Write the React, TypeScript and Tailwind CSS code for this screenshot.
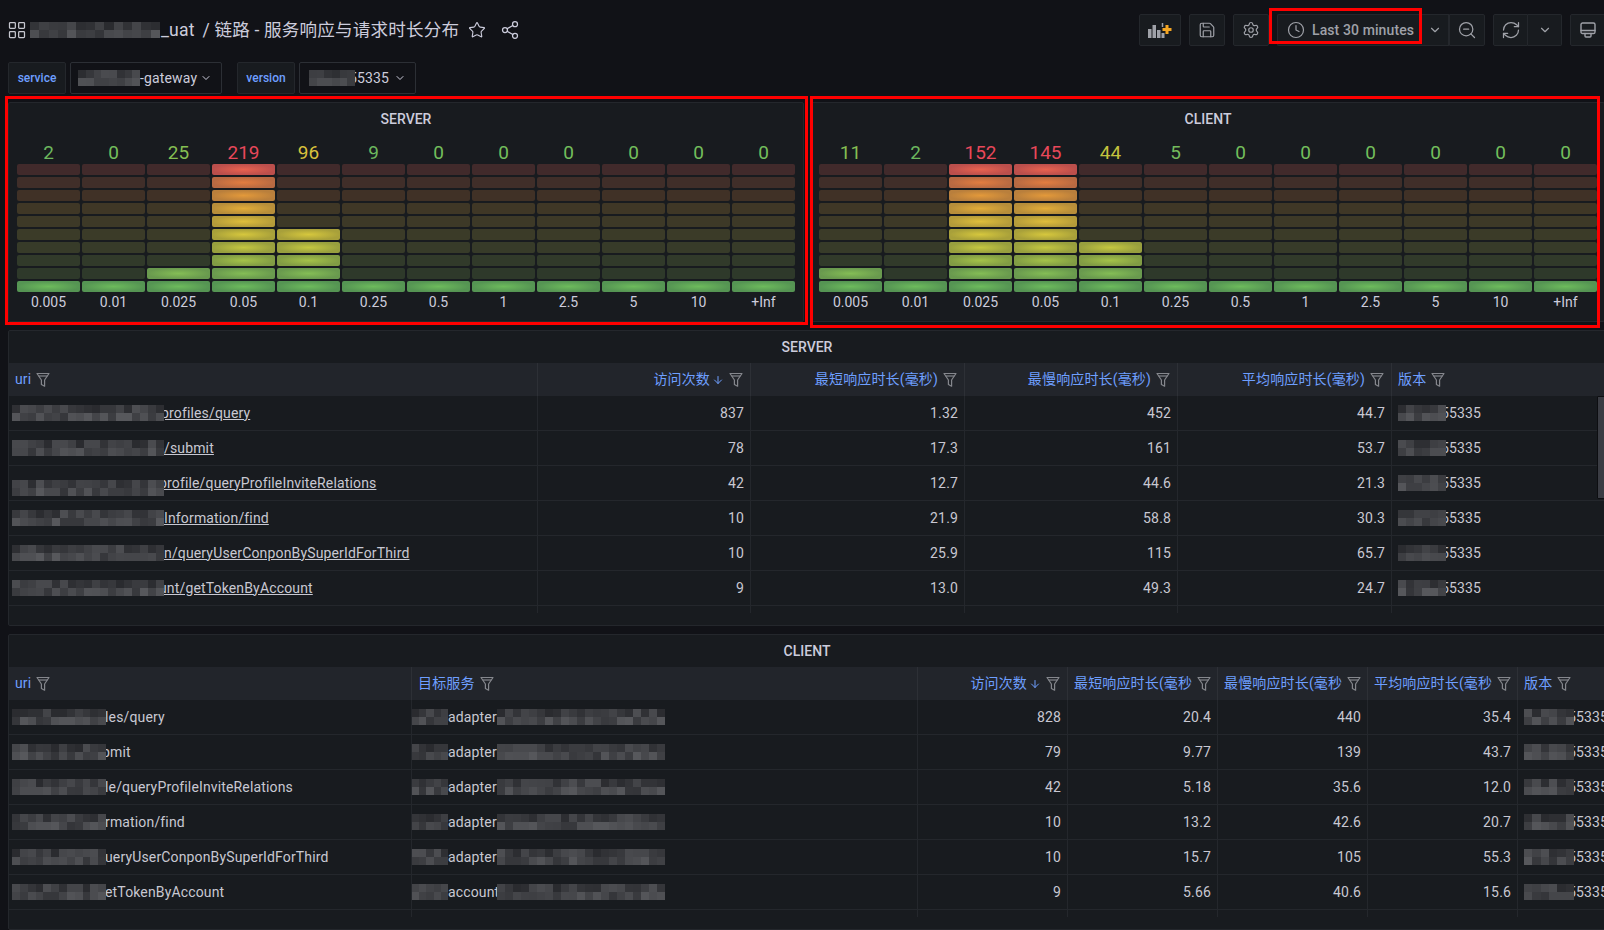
import React from "react";
import { ChevronDown, Clock, LayoutGrid, RefreshCw, Save, Settings, Share2, Star, ZoomOut, ArrowDown } from "lucide-react";

function Mosaic({ cols, rows = 2, seed, width, className = "" }: { cols: number; rows?: number; seed: number; width?: number; className?: string }) {
  const cells: string[] = [];
  let s = seed * 7919 + 13;
  for (let i = 0; i < cols * rows; i++) {
    s = (s * 1103515245 + 12345) & 0x7fffffff;
    const g = 42 + ((s >> 8) % 36) + (i % rows === 1 ? 10 : 0);
    cells.push(`rgb(${g},${g + 1},${g + 5})`);
  }
  return (
    <div
      className={`relative z-10 grid shrink-0 ${className}`}
      style={{ width: width ?? cols * 8, height: rows * 8, gridTemplateColumns: `repeat(${cols},1fr)`, gridAutoFlow: "column", gridTemplateRows: `repeat(${rows},1fr)` }}
    >
      {cells.map((c, i) => (
        <div key={i} style={{ background: c }} />
      ))}
    </div>
  );
}

function FilterIcon() {
  return (
    <svg width="14" height="16" viewBox="0 0 14 16" fill="none" stroke="#85878d" strokeWidth="1.2" strokeLinejoin="round" className="shrink-0">
      <path d="M1 1.5h12L8.6 8v6.2L5.4 12.4V8z" />
      <path d="M2.6 4h8.8" />
    </svg>
  );
}

const dim = [
  "bg-[#412a2b]", "bg-[#402e29]", "bg-[#403126]", "bg-[#3f3726]", "bg-[#3d3927]",
  "bg-[#3b3b28]", "bg-[#373b29]", "bg-[#313a2a]", "bg-[#2e392a]", "bg-[#2e392a]",
];
const lit = [
  "bg-[radial-gradient(closest-side,#e8624f,#bb4f4c)]",
  "bg-[radial-gradient(closest-side,#e27d40,#b76942)]",
  "bg-[radial-gradient(closest-side,#e3993a,#b97f3c)]",
  "bg-[radial-gradient(closest-side,#e2ac38,#b78e3a)]",
  "bg-[radial-gradient(closest-side,#dfbe3b,#b49b3a)]",
  "bg-[radial-gradient(closest-side,#d6c73d,#a8a03a)]",
  "bg-[radial-gradient(closest-side,#c4c740,#989f3e)]",
  "bg-[radial-gradient(closest-side,#a4c249,#819c44)]",
  "bg-[radial-gradient(closest-side,#84bd55,#69994e)]",
  "bg-[radial-gradient(closest-side,#6dbb5c,#559453)]",
];

const GREEN = "text-[#73bf5c]";
type Col = { v: string; n: number; c: string; l: string };

function Gauge({ title, cols, className }: { title: string; cols: Col[]; className: string }) {
  return (
    <div className={`${className} h-[220px] shrink-0 rounded-[2px] border border-[#24272c] bg-[#181b1f]`}>
      <div className="flex h-[32px] items-center justify-center text-[14px] font-medium text-[#ccccdc]">{title}</div>
      <div className="grid grid-cols-12 gap-x-[2px]">
        {cols.map((col, i) => (
          <div key={i} className="flex flex-col">
            <div className={`flex h-[29px] items-center justify-center pt-[6px] text-[19px] leading-none ${col.c}`}>{col.v}</div>
            <div className="flex flex-col gap-[2px]">
              {dim.map((d, r) => (
                <div key={r} className={`h-[11px] rounded-[2px] ${10 - r <= col.n ? lit[r] : d}`} />
              ))}
            </div>
            <div className="flex h-[20px] items-center justify-center text-[14px] text-[#ccccdc]">{col.l}</div>
          </div>
        ))}
      </div>
    </div>
  );
}

const labels = ["0.005", "0.01", "0.025", "0.05", "0.1", "0.25", "0.5", "1", "2.5", "5", "10", "+Inf"];
const mk = (vals: [string, number, string][]): Col[] => vals.map(([v, n, c], i) => ({ v, n, c, l: labels[i] }));

const serverCols = mk([
  ["2", 1, "text-[#6cb85e]"], ["0", 1, GREEN], ["25", 2, "text-[#85bf52]"], ["219", 10, "text-[#e8485a]"],
  ["96", 5, "text-[#d9c23c]"], ["9", 1, "text-[#6cb85e]"], ["0", 1, GREEN], ["0", 1, GREEN],
  ["0", 1, GREEN], ["0", 1, GREEN], ["0", 1, GREEN], ["0", 1, GREEN],
]);
const clientCols = mk([
  ["11", 2, "text-[#85bf52]"], ["2", 1, "text-[#6cb85e]"], ["152", 10, "text-[#e8485a]"], ["145", 10, "text-[#e8485a]"],
  ["44", 4, "text-[#c4c23e]"], ["5", 1, "text-[#74bb5c]"], ["0", 1, GREEN], ["0", 1, GREEN],
  ["0", 1, GREEN], ["0", 1, GREEN], ["0", 1, GREEN], ["0", 1, GREEN],
]);

function Head({ label, right, sort, className }: { label: string; right?: boolean; sort?: boolean; className?: string }) {
  return (
    <div className={`flex h-full items-center gap-[5px] border-r border-[#2d3036] pl-[6px] pr-[7px] text-[14px] text-[#6e9fff] ${right ? "justify-end" : ""} ${className ?? ""}`}>
      <span className="flex items-center gap-[2px] whitespace-nowrap">
        {label}
        {sort && <ArrowDown size={12} strokeWidth={2} />}
      </span>
      <FilterIcon />
    </div>
  );
}

function Num({ v }: { v: string }) {
  return <div className="flex h-full items-center justify-end border-r border-[#24272c] px-[6px] text-[14px]">{v}</div>;
}

const serverRows = [
  ["profiles/query", "837", "1.32", "452", "44.7"],
  ["/submit", "78", "17.3", "161", "53.7"],
  ["profile/queryProfileInviteRelations", "42", "12.7", "44.6", "21.3"],
  ["Information/find", "10", "21.9", "58.8", "30.3"],
  ["n/queryUserConponBySuperIdForThird", "10", "25.9", "115", "65.7"],
  ["unt/getTokenByAccount", "9", "13.0", "49.3", "24.7"],
];
const clientRows = [
  ["les/query", "adapter", "828", "20.4", "440", "35.4"],
  ["bmit", "adapter", "79", "9.77", "139", "43.7"],
  ["le/queryProfileInviteRelations", "adapter", "42", "5.18", "35.6", "12.0"],
  ["rmation/find", "adapter", "10", "13.2", "42.6", "20.7"],
  ["ueryUserConponBySuperIdForThird", "adapter", "10", "15.7", "105", "55.3"],
  ["etTokenByAccount", "account", "9", "5.66", "40.6", "15.6"],
];

function ServerTable() {
  const grid = "grid grid-cols-[529px_213px_214px_213px_214px_1fr]";
  return (
    <div className="relative h-[296px] w-[1598px] shrink-0 rounded-[2px] border border-[#24272c] bg-[#181b1f] tracking-[0.15px]">
      <div className="flex h-[32px] items-center justify-center text-[14px] font-medium tracking-normal text-[#ccccdc]">SERVER</div>
      <div className={`${grid} h-[33px] bg-[#22252b]`}>
        <Head label="uri" />
        <Head label="访问次数" sort right />
        <Head label="最短响应时长(毫秒)" right />
        <Head label="最慢响应时长(毫秒)" right />
        <Head label="平均响应时长(毫秒)" right />
        <Head label="版本" className="border-r-0" />
      </div>
      {serverRows.map((r, i) => (
        <div key={i} className={`${grid} h-[35px] border-b border-[#24272c] text-[#c8c8d2]`}>
          <div className="flex h-full items-center border-r border-[#24272c] pl-[3px] text-[14px]">
            <Mosaic cols={19} seed={i + 3} className={i === 2 ? "mt-[10px]" : ""} />
            <span className={`underline ${i === 0 ? "-ml-[3px]" : i === 2 || i === 5 ? "-ml-[5px]" : "ml-0"}`}>{r[0]}</span>
          </div>
          <Num v={r[1]} />
          <Num v={r[2]} />
          <Num v={r[3]} />
          <Num v={r[4]} />
          <div className="flex h-full items-center pl-[6px] text-[14px]">
            <Mosaic cols={6} seed={i + 31} />
            <span className="-ml-[5px]">55335</span>
          </div>
        </div>
      ))}
      <div className={`${grid} h-[7px]`}>
        <div className="border-r border-[#24272c]" />
        <div className="border-r border-[#24272c]" />
        <div className="border-r border-[#24272c]" />
        <div className="border-r border-[#24272c]" />
        <div className="border-r border-[#24272c]" />
      </div>
      <div className="absolute left-[1588px] top-[65px] h-[103px] w-[10px] rounded-[1px] border border-[#0d0e11] bg-[#3a3c43]" />
    </div>
  );
}

function ClientTable() {
  const grid = "grid grid-cols-[403px_506px_150px_150px_150px_150px_1fr]";
  return (
    <div className="h-[296px] w-[1598px] shrink-0 rounded-[2px] border border-[#24272c] bg-[#181b1f] tracking-[0.15px]">
      <div className="flex h-[32px] items-center justify-center text-[14px] font-medium tracking-normal text-[#ccccdc]">CLIENT</div>
      <div className={`${grid} h-[33px] bg-[#22252b]`}>
        <Head label="uri" />
        <Head label="目标服务" />
        <Head label="访问次数" sort right />
        <Head label="最短响应时长(毫秒" className="justify-between" />
        <Head label="最慢响应时长(毫秒" className="justify-between" />
        <Head label="平均响应时长(毫秒" className="justify-between" />
        <Head label="版本" className="border-r-0" />
      </div>
      {clientRows.map((r, i) => (
        <div key={i} className={`${grid} h-[35px] border-b border-[#24272c] text-[#c8c8d2]`}>
          <div className="flex h-full items-center border-r border-[#24272c] pl-[3px] text-[14px]">
            <Mosaic cols={12} seed={i + 51} width={94} />
            <span className={`whitespace-nowrap ${i === 1 ? "-ml-[4px]" : "-ml-[1px]"}`}>{r[0]}</span>
          </div>
          <div className="flex h-full items-center border-r border-[#24272c] text-[14px]">
            <Mosaic cols={5} seed={i + 71} width={36} />
            <span className="w-[49px] shrink-0">{r[1]}</span>
            <Mosaic cols={21} seed={i + 91} width={168} />
          </div>
          <Num v={r[2]} />
          <Num v={r[3]} />
          <Num v={r[4]} />
          <Num v={r[5]} />
          <div className="flex h-full items-center pl-[6px] text-[14px]">
            <Mosaic cols={6} seed={i + 111} width={50} />
            <span className="-ml-[6px]">55335</span>
          </div>
        </div>
      ))}
      <div className={`${grid} h-[7px]`}>
        <div className="border-r border-[#24272c]" />
        <div className="border-r border-[#24272c]" />
        <div className="border-r border-[#24272c]" />
        <div className="border-r border-[#24272c]" />
        <div className="border-r border-[#24272c]" />
        <div className="border-r border-[#24272c]" />
      </div>
    </div>
  );
}

const btn = "flex h-[32px] items-center justify-center border border-[#24272c] bg-[#181b1f] text-[#9fa1a8]";

export default function App() {
  return (
    <div className="relative h-[930px] w-[1604px] overflow-hidden bg-[#111217] font-[Roboto,'Noto_Sans_CJK_SC',sans-serif] text-[#ccccdc]">
      <div className="flex h-[60px] w-[1606px] items-center justify-between">
        <div className="flex items-center pl-[7px]">
          <LayoutGrid size={20} strokeWidth={1.5} className="text-[#c7c8d0]" />
          <Mosaic cols={14} rows={2} seed={201} width={130} className="ml-[3px] h-[18px]" />
          <span className="ml-[1px] text-[17.6px] tracking-[0.15px] text-[#ccccdc]">_uat</span>
          <span className="ml-[8px] whitespace-nowrap text-[17.6px] tracking-[0.15px] text-[#ccccdc]">/ 链路 - 服务响应与请求时长分布</span>
          <Star size={18} strokeWidth={1.5} className="ml-[9px] text-[#ccccdc]" />
          <Share2 size={20} strokeWidth={1.5} className="ml-[14px] text-[#ccccdc]" />
        </div>
        <div className="flex items-center">
          <div className={`${btn} w-[42px] rounded-[2px]`}>
            <svg width="24" height="16" viewBox="0 0 24 16">
              <rect x="0" y="7" width="3.5" height="9" fill="#9fa1a8" />
              <rect x="4.5" y="3" width="3.5" height="13" fill="#9fa1a8" />
              <rect x="9" y="8" width="3.5" height="8" fill="#9fa1a8" />
              <rect x="13.5" y="11" width="3" height="5" fill="#9fa1a8" />
              <path d="M14.5 1v4" stroke="#9fa1a8" strokeWidth="1.5" fill="none" />
              <path d="M19 3v9M14.5 7.5h9" stroke="#f5a623" strokeWidth="3" fill="none" />
            </svg>
          </div>
          <div className={`${btn} ml-[8px] w-[36px] rounded-[2px]`}><Save size={18} strokeWidth={1.6} /></div>
          <div className={`${btn} ml-[8px] w-[36px] rounded-[2px]`}><Settings size={18} strokeWidth={1.6} /></div>
          <div className={`${btn} ml-[8px] w-[145px] justify-start rounded-l-[2px] border-r-0 pl-[9px] text-[14px] font-medium tracking-[0.1px]`}>
            <Clock size={18} strokeWidth={1.6} />
            <span className="ml-[7px] whitespace-nowrap">Last 30 minutes</span>
          </div>
          <div className={`${btn} w-[27px] border-l-0`}><ChevronDown size={14} /></div>
          <div className={`${btn} w-[36px] rounded-r-[2px]`}><ZoomOut size={20} strokeWidth={1.5} /></div>
          <div className={`${btn} ml-[8px] w-[35px] rounded-l-[2px]`}><RefreshCw size={20} strokeWidth={1.5} /></div>
          <div className={`${btn} w-[34px] rounded-r-[2px] border-l-0`}><ChevronDown size={14} /></div>
          <div className={`${btn} ml-[8px] w-[36px] rounded-[2px]`}>
            <svg width="16" height="16" viewBox="0 0 16 16" fill="none" stroke="currentColor" strokeWidth="1.4" strokeLinecap="round" strokeLinejoin="round">
              <rect x="1" y="1" width="14" height="10.5" rx="1.6" />
              <path d="M1 8.5h14" />
              <path d="M5 11.5v2.5a1 1 0 0 0 1 1h4a1 1 0 0 0 1-1v-2.5" />
            </svg>
          </div>
        </div>
      </div>

      <div className="mt-[2px] flex h-[32px] items-stretch pl-[8px]">
        <div className="flex w-[58px] items-center justify-center rounded-[2px] border border-[#24272c] bg-[#181b1f] text-[12px] font-medium text-[#6e9fff]">service</div>
        <div className="ml-[4px] flex w-[152px] items-center rounded-[2px] border border-[#2c2f35] pl-[7px] text-[14px] tracking-[0.15px]">
          <Mosaic cols={8} seed={301} width={62} />
          <span>-gateway</span>
          <ChevronDown size={12} className="ml-[3px]" />
        </div>
        <div className="ml-[15px] flex w-[58px] items-center justify-center rounded-[2px] border border-[#24272c] bg-[#181b1f] text-[12px] font-medium text-[#6e9fff]">version</div>
        <div className="ml-[4px] flex w-[117px] items-center rounded-[2px] border border-[#2c2f35] pl-[9px] text-[14px] tracking-[0.15px]">
          <Mosaic cols={6} seed={311} width={46} />
          <span className="-ml-[6px]">55335</span>
          <ChevronDown size={12} className="ml-[5px]" />
        </div>
      </div>

      <div className="mt-[8px] flex gap-[7px] pl-[8px]">
        <Gauge title="SERVER" cols={serverCols} className="w-[796px] px-[8px]" />
        <Gauge title="CLIENT" cols={clientCols} className="w-[794px] px-[7px]" />
      </div>

      <div className="mt-[8px] pl-[8px]">
        <ServerTable />
      </div>
      <div className="mt-[8px] pl-[8px]">
        <ClientTable />
      </div>

      <div className="absolute left-[5px] top-[96px] h-[229px] w-[803px] border-[3px] border-[#ff0000]" />
      <div className="absolute left-[810px] top-[96px] h-[232px] w-[790px] border-[3px] border-[#ff0000]" />
      <div className="absolute left-[1269px] top-[8px] h-[36px] w-[153px] border-[3px] border-[#ff0000]" />
    </div>
  );
}
